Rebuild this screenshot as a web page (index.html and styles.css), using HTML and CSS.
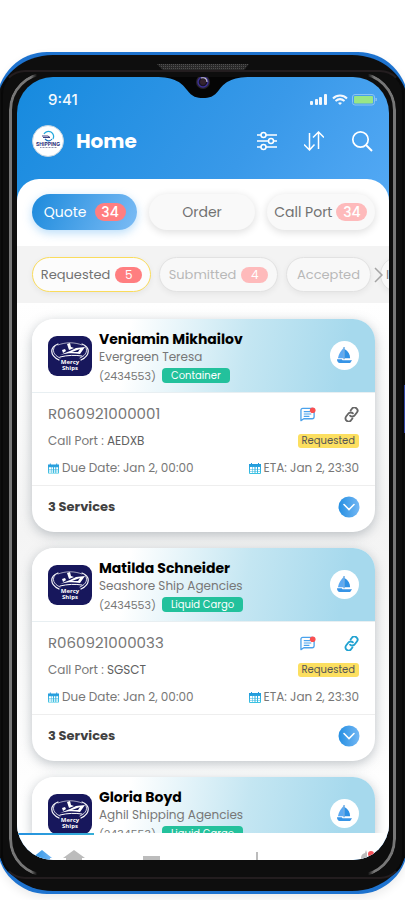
FILE: index.html
```html
<!DOCTYPE html>
<html lang="en">
<head>
<meta charset="utf-8">
<meta name="viewport" content="width=device-width, initial-scale=1">
<title>Home</title>
<link rel="stylesheet" href="styles.css">
</head>
<body>
<svg class="defs" width="0" height="0" aria-hidden="true">
  <defs>
    <linearGradient id="blue" x1="0" y1="0" x2="1" y2="0"><stop offset="0" stop-color="#258fe2"/><stop offset="1" stop-color="#73b7f4"/></linearGradient>
    <linearGradient id="sea" x1="0" y1="0" x2="0" y2="1"><stop offset="0" stop-color="#2094dc"/><stop offset="1" stop-color="#3cc4e2"/></linearGradient>
    <symbol id="mercy" viewBox="0 0 44 40">
      <g fill="none" stroke="#fff" stroke-linecap="round">
        <path d="M10 8C2 11 1 19 11 24" stroke-width="1.2"/><path d="M7 10C4 14 5 19 12 22" stroke-width=".8"/>
        <path d="M34 8c8 3 9 11-1 16" stroke-width="1.2"/><path d="M37 10c3 4 2 9-5 12" stroke-width=".8"/>
        <path d="M10 9c8-3 16-3 24 0" stroke-width=".6"/>
        <path d="M12 21c8-2 15-2 22-1" stroke-width="1"/>
      </g>
      <path d="M12 19l5-2 5-2 6-3 9-1-5 7c-7-1-13-1-20 1z" fill="#fff"/>
      <path d="M24 16l8-3-2 3z" fill="#17175c"/>
      <path d="M19 8l3-1 1 4 3 1-5 2zM14 14l3-1 1 2-3 2z" fill="#fff"/>
      <text x="22" y="28" class="mark">Mercy</text><text x="22" y="34" class="mark">Ships</text>
    </symbol>
    <symbol id="boat" viewBox="0 0 16 18">
      <path d="M7 1v11H1C2 7 4 4 7 1z" fill="#5ba9f2"/><path d="M8 2c4 2 6 6 6 10H8z" fill="#2e91e5"/><path d="M7 0h1v13H7z" fill="#2581d4"/>
      <path d="M0 13h5l1 1h10l-2 3H3c-2 0-3-2-3-4z" fill="#3694e6"/>
    </symbol>
    <symbol id="chat" viewBox="0 0 17 15">
      <path d="M1 14V3q0-2 2-2h10q2 0 2 2v7q0 2-2 2H4z" fill="none" stroke="#4ba2ec" stroke-width="1.4" stroke-linejoin="round"/>
      <path d="M4 4.500h7M4 7h8M4 9.500h6" stroke="#4ba2ec" stroke-width="1.200"/><circle cx="13.500" cy="3" r="3" fill="#fa4f50"/>
    </symbol>
    <symbol id="link" viewBox="0 0 24 24">
      <g fill="none" stroke="currentColor" stroke-width="3" stroke-linecap="round" transform="rotate(-8 12 12)"><path d="M9.500 13.500a5 5 0 0 0 7.500.5l4-4a4.800 4.800 0 0 0-7-7l-2.500 2.500"/><path d="M14.500 10.500a5 5 0 0 0-7.500-.5l-4 4a4.800 4.800 0 0 0 7 7l2.500-2.500"/></g>
    </symbol>
    <symbol id="calendar" viewBox="0 0 12 11">
      <path d="M0 1h2V0h1v1h6V0h1v1h2v9q0 1-1 1H1q-1 0-1-1z" fill="url(#sea)"/>
      <path d="M1 4h2.500v2H1zm3 0h1.500v2H4zm2.500 0H8v2H6.500zm2.500 0h2v2H9zM1 6.500h2.500v1.500H1zM4 6.500h1.500v1.500H4zm2.500 0H8v1.500H6.500zM9 6.500h2v1.500H9zM1 8.500h2.500v1.500H1zM4 8.500h1.500v1.500H4zm2.500 0H8v1.500H6.500zM9 8.500h2v1.500H9z" fill="#fff"/>
    </symbol>
    <symbol id="down" viewBox="0 0 22 22"><circle cx="11" cy="11" r="10.500" fill="url(#blue)"/><path d="M6 8.500l5 5 5-5" fill="none" stroke="#fff" stroke-width="1.600" stroke-linecap="round"/></symbol>
  </defs>
</svg>
<div class="phone">
  <div class="shell">
    <svg class="speaker" viewBox="0 0 92 6" aria-hidden="true">
      <defs><pattern id="mesh" width="2" height="2" patternUnits="userSpaceOnUse"><path d="M0 0h2v2H0z" fill="#292929"/><path d="M0 0h1v1H0z" fill="#515151"/></pattern></defs>
      <path d="M0 0h92l-5 6H6z" fill="url(#mesh)"/>
    </svg>
    <div class="frame">
      <div class="screen">
        <svg class="notch" viewBox="0 0 96 26" aria-hidden="true">
          <path d="M0 4V4C20 4 27 10 32 17c5 7 10 8 16 8s11-1 16-8c5-7 12-13 32-13V0H0z" fill="#050505"/>
          <circle cx="48" cy="9" r="7" fill="#28242b"/><circle cx="48" cy="9" r="5" fill="#191423" stroke="#3c3094" stroke-width="1.500"/><circle cx="48" cy="9" r="3" fill="#35232f"/><path d="M46 5c4-1 6 1 6 4" fill="none" stroke="#c7c4d0" stroke-width="1.200"/>
        </svg>
        <div class="status">
          <span>9:41</span>
          <svg width="67" height="12" viewBox="0 0 67 12" aria-hidden="true">
            <g fill="#f3f8fd"><rect x="0" y="7" width="3" height="4" rx="1"/><rect x="5" y="5" width="3" height="6" rx="1"/><rect x="9" y="3" width="3" height="8" rx="1"/><rect x="14" y="0" width="3" height="11" rx="1"/></g>
            <g fill="none" stroke="#f3f8fd" stroke-width="2"><path d="M23 4.500c4-4 10-4 14 0"/><path d="M25.500 7c3-2.500 6-2.500 9 0"/></g><path d="M28 9q2-1.500 4 0l-2 2z" fill="#f3f8fd"/>
            <rect x="42.500" y=".5" width="22" height="10.500" rx="2.500" fill="none" stroke="#8bc3f3"/><rect x="44" y="2" width="19" height="7.500" rx="1" fill="#98e686"/><path d="M66 4q1 1.500 0 3z" fill="#8bc3f3" stroke="#8bc3f3"/>
          </svg>
        </div>
        <header class="topbar">
          <svg class="brand" viewBox="0 0 32 32" aria-hidden="true">
            <circle cx="16" cy="16" r="15.500" fill="#fff" stroke="#c2d3e0"/>
            <path d="M12 9a5 5 0 0 1 9 5" fill="none" stroke="#23a9dd" stroke-width="1.300"/><path d="M10 11h6l2 1.500h-7" fill="none" stroke="#292d78" stroke-width=".9"/><path d="M20 14c-2 3-5 2-7 0" fill="none" stroke="#1c73bd" stroke-width="1.200"/>
            <text x="16" y="21" class="brand-name">SHIPPING</text><path d="M8 22.500h17" stroke="#62658e" stroke-width=".7" stroke-dasharray="1 .5"/>
          </svg>
          <h1>Home</h1>
          <button class="tool" aria-label="Filters"><svg width="20" height="20" viewBox="0 0 20 20"><g fill="none" stroke="#fff" stroke-width="1.500"><path d="M0 4h4m5 0h11M0 10h11m6 0h3M0 16h4m5 0h11"/><circle cx="6.500" cy="4" r="2.500"/><circle cx="14" cy="10" r="2.500"/><circle cx="6.500" cy="16" r="2.500"/></g></svg></button>
          <button class="tool" aria-label="Sort"><svg width="20" height="20" viewBox="0 0 20 20"><path d="M5.500 2v17M0 13.500l5.500 5.500 5-5.500M14.500 18V1M9 6.500L14.500 1l5.500 5.500" fill="none" stroke="#fff" stroke-width="1.500"/></svg></button>
          <button class="tool" aria-label="Search"><svg width="22" height="22" viewBox="0 0 22 22"><circle cx="9.500" cy="9.500" r="7.700" fill="none" stroke="#fff" stroke-width="1.700"/><path d="M15 15l6 6" stroke="#fff" stroke-width="2"/></svg></button>
        </header>
        <main class="sheet">
          <nav class="tabs" aria-label="Records">
            <button class="tab active">Quote <b class="count">34</b></button>
            <button class="tab">Order</button>
            <button class="tab call">Call Port <b class="count pale">34</b></button>
          </nav>
          <div class="filters">
            <button class="pill active">Requested <b class="small-count">5</b></button>
            <button class="pill">Submitted <b class="small-count pale">4</b></button>
            <button class="pill accepted">Accepted</button>
            <button class="next" aria-label="More"><svg width="9" height="16" viewBox="0 0 9 16"><path d="M1 1l7 7-7 7" fill="none" stroke="#a4a4a4" stroke-width="1.500"/></svg></button>
            <button class="pill rest">I</button>
          </div>
          <div class="cards">
            <article class="card">
              <header class="card-head">
                <svg class="logo" aria-hidden="true"><use href="#mercy"/></svg>
                <div class="who"><h2>Veniamin Mikhailov</h2><p>Evergreen Teresa</p><div class="meta">(2434553) <span class="tag">Container</span></div></div>
                <span class="ship"><svg width="15" height="17"><use href="#boat"/></svg></span>
              </header>
              <div class="details">
                <div class="line first"><span class="ref">R060921000001</span><span class="actions"><button aria-label="Messages"><svg width="16" height="15"><use href="#chat"/></svg></button><button class="link" aria-label="Link"><svg width="15" height="15"><use href="#link"/></svg></button></span></div>
                <div class="line"><span>Call Port : <em>AEDXB</em></span><span class="state">Requested</span></div>
                <div class="line dates"><span><svg width="11" height="11"><use href="#calendar"/></svg>Due Date: Jan 2, 00:00</span><span><svg width="12" height="11"><use href="#calendar"/></svg>ETA: Jan 2, 23:30</span></div>
              </div>
              <footer class="services"><span>3 Services</span><button aria-label="Expand"><svg width="22" height="22"><use href="#down"/></svg></button></footer>
            </article>
            <article class="card">
              <header class="card-head">
                <svg class="logo" aria-hidden="true"><use href="#mercy"/></svg>
                <div class="who"><h2>Matilda Schneider</h2><p>Seashore Ship Agencies</p><div class="meta">(2434553) <span class="tag">Liquid Cargo</span></div></div>
                <span class="ship"><svg width="15" height="17"><use href="#boat"/></svg></span>
              </header>
              <div class="details">
                <div class="line first"><span class="ref">R060921000033</span><span class="actions"><button aria-label="Messages"><svg width="16" height="15"><use href="#chat"/></svg></button><button class="link linked" aria-label="Link"><svg width="15" height="15"><use href="#link"/></svg></button></span></div>
                <div class="line"><span>Call Port : <em>SGSCT</em></span><span class="state">Requested</span></div>
                <div class="line dates"><span><svg width="11" height="11"><use href="#calendar"/></svg>Due Date: Jan 2, 00:00</span><span><svg width="12" height="11"><use href="#calendar"/></svg>ETA: Jan 2, 23:30</span></div>
              </div>
              <footer class="services"><span>3 Services</span><button aria-label="Expand"><svg width="22" height="22"><use href="#down"/></svg></button></footer>
            </article>
            <article class="card">
              <header class="card-head">
                <svg class="logo" aria-hidden="true"><use href="#mercy"/></svg>
                <div class="who"><h2>Gloria Boyd</h2><p>Aghil Shipping Agencies</p><div class="meta">(2434553) <span class="tag">Liquid Cargo</span></div></div>
                <span class="ship"><svg width="15" height="17"><use href="#boat"/></svg></span>
              </header>
            </article>
          </div>
        </main>
        <nav class="bottom" aria-label="Main">
          <a href="#" class="current" aria-label="Home"><svg width="20" height="16" viewBox="0 0 20 16"><path d="M10 0l10 8h-2v8H2V8H0z" fill="url(#blue)"/></svg></a>
          <a href="#" aria-label="Port"><svg width="22" height="16" viewBox="0 0 22 16"><path d="M11 0l11 8h-3v8H3V8H0z"/></svg></a>
          <a href="#" aria-label="Documents"><svg width="17" height="16" viewBox="0 0 17 16"><path d="M0 6h17v10H0z"/></svg></a>
          <a href="#" aria-label="Add"><svg width="16" height="16" viewBox="0 0 16 16"><path d="M7 2h2v14H7z"/></svg></a>
          <a href="#" aria-label="Alerts"><svg width="16" height="16" viewBox="0 0 16 16"><path d="M1 16V8q0-4 4-5l1-3 1 3v13z"/><circle cx="11" cy="4" r="3" fill="#f55259"/></svg></a>
        </nav>
      </div>
    </div>
  </div>
  <span class="power"></span>
</div>
</body>
</html>
```
FILE: styles.css
```css
* { box-sizing: border-box; }
body { margin: 0; min-height: 100vh; padding: 52px 0 6px; display: flex; background: #fff; color: #777; font-family: Poppins, Inter, "Noto Sans", sans-serif; font-size: 12px; font-weight: 300; line-height: 18px; overflow: hidden; }
h1, h2, p { margin: 0; }
button { font: inherit; color: inherit; border: 0; background: none; padding: 0; }
svg { display: block; flex: none; }
.defs { position: absolute; }

.phone { position: relative; flex: 1; min-width: 0; height: calc(100vh - 58px); margin: 0 -3px; padding: 3px 0; border-radius: 50px; background: #1e73cf; box-shadow: 0 4px 10px rgba(0,0,0,.08); }
.shell { position: relative; height: 100%; padding: 15px 4px 12px; border-radius: 56px / 50px; background: #0e0e0e; }
.speaker { position: absolute; top: 9px; left: 50%; width: 92px; margin-left: -46px; }
.power { position: absolute; top: 333px; right: 3px; width: 1px; height: 48px; background: #3043a0; }
.frame { position: relative; height: 100%; padding: 5px 13px 17px 14px; border: 2px solid #231d1f; border-left-color: #080808; border-right-color: #080808; border-radius: 24px; background: #0e0e0e; }
.frame::before { content: ""; position: absolute; inset: 0 6px; border: 3px solid #777; border-radius: 38px; mask-image: linear-gradient(to right, #000 22px, transparent 28px, transparent calc(100% - 28px), #000 calc(100% - 22px)); }
.screen { position: relative; height: 100%; display: flex; flex-direction: column; overflow: hidden; border-radius: 36px; background: linear-gradient(125deg, #168ade 0, #3999e9 230px, #5caef8 420px); }
.notch { position: absolute; z-index: 2; top: -4px; left: 50%; width: 96px; margin-left: -48px; }

.status { display: flex; align-items: center; justify-content: space-between; padding: 14px 12px 0 31px; color: #f3f8fd; font-family: Inter, sans-serif; font-size: 15px; font-weight: 500; }
.topbar { display: flex; align-items: center; gap: 27px; padding: 16px 16px 22px 15px; color: #fff; }
.brand { width: 32px; height: 32px; }
.brand-name { font: 700 5px Inter, sans-serif; fill: #292d78; text-anchor: middle; }
h1 { flex: 1; margin-left: -15px; font-size: 20px; font-weight: 700; line-height: 32px; }
.sheet { flex: 1; min-height: 0; overflow: hidden; border-radius: 22px 22px 0 0; background: #fff; }
.tabs { display: grid; grid-template-columns: 105fr 105fr 108fr; gap: 12px; padding: 15px 14px 16px 15px; color: #727272; font-size: 14px; font-weight: 400; }
.tab { height: 36px; display: flex; align-items: center; justify-content: center; gap: 8px; border-radius: 18px; background: #f9f9f9; box-shadow: 0 2px 8px rgba(0,0,0,.14); white-space: nowrap; }
.tab.active { color: #fff; background: linear-gradient(115deg, #1c8adc, #7cbcf5); box-shadow: 0 3px 10px rgba(80,170,240,.4); }
.tab.call { gap: 4px; }
.count, .small-count { border-radius: 9px; background: #ff7e80; color: #fff; text-align: center; font-weight: 500; }
.count { width: 31px; line-height: 18px; }
.small-count { width: 27px; font-size: 12px; font-weight: 400; line-height: 16px; }
.pale { background: #febabb; }
.filters { display: flex; align-items: center; gap: 8px; height: 57px; padding: 0 0 0 15px; overflow: hidden; background: #f3f3f3; color: #b8b8b8; font-size: 13px; font-weight: 400; }
.pill { flex: none; width: 119px; height: 35px; display: flex; align-items: center; justify-content: center; gap: 5px; border: 1px solid #e2e2e2; border-radius: 18px; background: #f8f8f8; box-shadow: 0 2px 6px rgba(0,0,0,.06); white-space: nowrap; }
.pill.active { border: 1px solid #fadc5c; background: #fcfcfc; color: #727272; }
.pill.accepted { width: 85px; }
.next { position: relative; z-index: 1; flex: none; margin: 0 -11px 0 -5px; }
.pill.rest { justify-content: flex-start; width: 80px; padding-left: 5px; color: #888; }

.cards { display: grid; gap: 16px; padding: 16px 14px 16px 15px; background: linear-gradient(#fff, #f4f4f4 230px, #fff 500px); }
.card { border-radius: 22px; background: #fff; box-shadow: 0 3px 12px rgba(80,95,105,.36); font-weight: 400; }
.card-head { display: flex; align-items: center; height: 74px; padding: 0 16px; border-bottom: 1px solid #e8eff2; border-radius: 22px 22px 0 0; background: linear-gradient(100deg, #fff 28%, #c4e6f2 62%, #a6d9ed 90%); }
.logo { width: 44px; height: 40px; border-radius: 9px; background: #17175c; }
.mark { font: 700 6px "Open Sans", sans-serif; fill: #fff; text-anchor: middle; }
.who { flex: 1; margin-left: 7px; padding-top: 4px; white-space: nowrap; }
h2 { color: #000; font-size: 14px; font-weight: 700; line-height: 18px; }
.meta { display: flex; align-items: center; gap: 6px; height: 20px; font-size: 11px; }
.tag { padding: 0 9px; border-radius: 4px; background: #23c19c; color: #fff; font-size: 10px; line-height: 15px; }
.ship { display: grid; place-items: center; width: 29px; height: 29px; border-radius: 50%; background: #fff; }
.details { display: grid; gap: 6px; padding: 9px 16px 5px; }
.line { display: flex; align-items: center; justify-content: space-between; }
.line.first { height: 24px; }
.line em { color: #606060; font-style: normal; }
.ref { font-size: 15px; }
.actions { display: flex; align-items: center; gap: 28px; }
.link { color: #666; }
.linked { color: #21a2d1; }
.state { padding: 0 4px; border-radius: 3px; background: #fcdf60; color: #555; font-size: 10px; line-height: 14px; }
.dates { height: 24px; }
.dates span { display: flex; align-items: center; gap: 3px; }
.services { display: flex; align-items: center; justify-content: space-between; height: 47px; padding: 0 15px 5px 16px; border-top: 1px solid #eee; color: #414141; font-size: 13px; font-weight: 700; }

.bottom { position: relative; flex: none; display: grid; grid-template-columns: 50px 14px 140px 72px 1fr; height: 27px; padding-top: 17px; overflow: hidden; background: #fff; }
.bottom::before { content: ""; position: absolute; top: 0; left: 0; width: 77px; height: 2px; background: linear-gradient(to right, #2490df, #36aed7); }
.bottom a { display: flex; justify-content: center; fill: #bcbcbc; }
.bottom a:last-child { justify-content: flex-end; padding-right: 13px; }
```
